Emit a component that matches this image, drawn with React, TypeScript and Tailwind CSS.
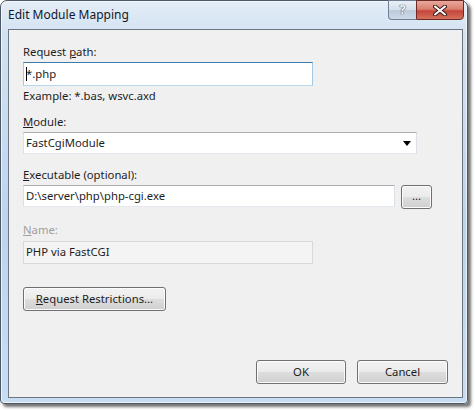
import React from 'react'

const font = "font-['Noto_Sans','Liberation_Sans',sans-serif]"

const btn =
    'flex items-center justify-center rounded-[3px] border border-[#707070] text-[11.3px] text-[#1e1e1e] shadow-[inset_0_0_0_1px_#fbfbfb] bg-[linear-gradient(180deg,#f2f2f2_0%,#ebebeb_48%,#dddddd_52%,#cfcfcf_100%)]'

const field = 'border border-[#dbdfe6] border-t-[#abadb3] border-b-[#e3e9ef] bg-white flex items-center pl-[2px] text-[11.3px] text-[#1e1e1e]'

const label = 'h-[16px] leading-[16px] text-[11.3px] text-[#1e1e1e]'

const App: React.FC = () => {
    return (
        <div className={`w-[475px] h-[411px] bg-white ${font}`}>
            <div className="w-[468px] h-[404px] flex flex-col rounded-t-[7px] rounded-b-[4px] border border-[#4c5866] shadow-[3px_3px_3px_rgba(0,0,0,0.55),inset_0_0_0_1px_rgba(255,255,255,0.65)] bg-[linear-gradient(180deg,#e4edf7_0%,#d3e2f2_8%,#bed4ec_55%,#c9ddf2_100%)]">
                {/* title bar */}
                <div className="h-[28px] flex items-start justify-between">
                    <div className="pl-[7px] pt-[6px] text-[12px] leading-[16px] text-[#10182a]">Edit Module Mapping</div>
                    <div className="flex mr-[3px] -mt-px">
                        <div className="w-[28px] h-[20px] flex items-center justify-center rounded-bl-[4px] border border-[#6f7f93] border-r-0 bg-[linear-gradient(180deg,#e9eff6_0%,#d5e0ec_48%,#bccbdc_52%,#cbd9e8_100%)] text-[13px] font-bold text-[#f5f8fb] [text-shadow:0_0_1px_#2b3a4d,0_0_1px_#2b3a4d]">
                            ?
                        </div>
                        <div className="w-[48px] h-[20px] flex items-center justify-center rounded-br-[4px] border border-[#6e2a22] bg-[linear-gradient(180deg,#e8a99d_0%,#d98070_45%,#c7453a_55%,#d4705c_100%)]">
                            <svg width="14" height="11" viewBox="0 0 14 11">
                                <path d="M2 1.5 L12 9.5 M12 1.5 L2 9.5" stroke="#3b1f1b" strokeWidth="4" strokeLinecap="round" />
                                <path d="M2 1.5 L12 9.5 M12 1.5 L2 9.5" stroke="#ffffff" strokeWidth="2" strokeLinecap="round" />
                            </svg>
                        </div>
                    </div>
                </div>

                {/* client area */}
                <div className="flex-1 ml-[7px] mr-[4px] mb-[5px] border border-[#6b7685] bg-[#f0f0f0] flex flex-col pl-[14px] pr-[14px]">
                    <div className={`mt-[14px] ${label}`}>
                        Request <span className="underline">p</span>ath:
                    </div>
                    <div className="mt-[2px] w-[290px] h-[24px] border border-[#a4c9e3] border-t-[#3d7bad] border-b-[#b7d9ed] bg-white flex items-center pl-[2px] text-[11.3px] text-[#1e1e1e]">
                        <span className="w-px h-[14px] bg-black mr-[-1px]" />
                        *.php
                    </div>
                    <div className={`mt-[2px] ${label}`}>Example: *.bas, wsvc.axd</div>

                    <div className={`mt-[10px] ${label}`}>
                        <span className="underline">M</span>odule:
                    </div>
                    <div className={`mt-[2px] w-[394px] h-[22px] ${field} justify-between pr-[5px]`}>
                        <span>FastCgiModule</span>
                        <svg width="8" height="5" viewBox="0 0 8 5">
                            <path d="M0 0 H8 L4 5 Z" fill="#000" />
                        </svg>
                    </div>

                    <div className={`mt-[13px] ${label}`}>
                        <span className="underline">E</span>xecutable (optional):
                    </div>
                    <div className="mt-[2px] flex items-start gap-[6px]">
                        <div className={`w-[372px] h-[22px] ${field}`}>D:\server\php\php-cgi.exe</div>
                        <div className={`${btn} w-[31px] h-[24px] leading-none pb-[3px]`}>...</div>
                    </div>

                    <div className="mt-[13px] h-[16px] leading-[16px] text-[11.3px] text-[#a0a0a0]">
                        <span className="underline">N</span>ame:
                    </div>
                    <div className="mt-[3px] w-[290px] h-[23px] border border-[#d9d9d9] bg-[#f4f4f4] flex items-center pl-[2px] text-[11.3px] text-[#1e1e1e]">
                        PHP via FastCGI
                    </div>

                    <div className={`${btn} mt-[23px] w-[143px] h-[24px]`}>
                        <span>
                            <span className="underline">R</span>equest Restrictions...
                        </span>
                    </div>

                    <div className="flex-1" />

                    <div className="flex justify-end gap-[11px] mb-[13px]">
                        <div className={`${btn} w-[90px] h-[24px] border-[#3c7fb1] shadow-[inset_0_0_0_1px_#a8dcf5]`}>OK</div>
                        <div className={`${btn} w-[91px] h-[24px]`}>Cancel</div>
                    </div>
                </div>
            </div>
        </div>
    )
}

export default App
